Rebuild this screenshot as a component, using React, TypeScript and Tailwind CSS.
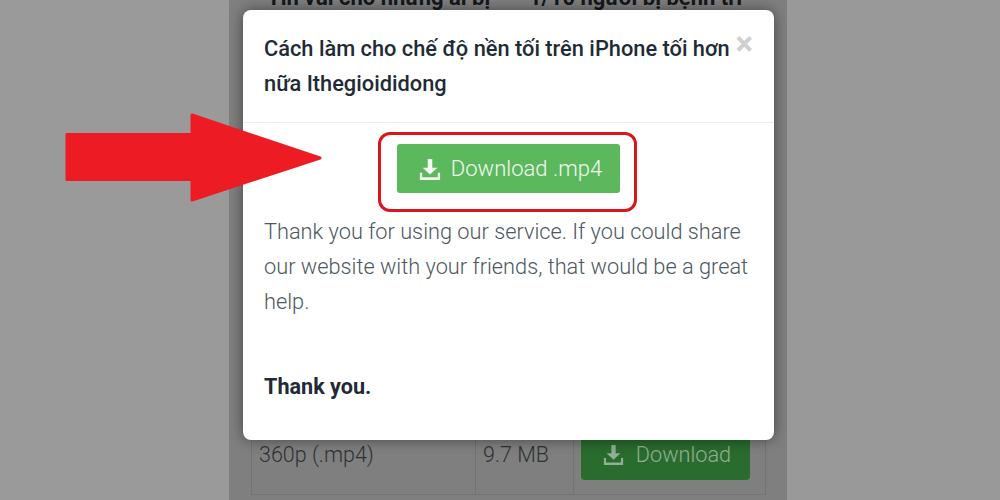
function DownloadIcon({ className }: { className: string }) {
  return (
    <svg viewBox="0 0 24 24" className={className} fill="currentColor">
      <path d="M9.500 1h5v9.500H20L12 18 4 10.500h5.500z" />
      <path d="M1 16h2.500v5h17v-5H23v8H1z" />
    </svg>
  );
}

function Arrow() {
  return (
    <svg viewBox="0 0 270 100" className="absolute left-[60px] top-[108px] w-[270px] h-[100px]">
      <path
        d="M7 26.500H132V7L260 50 132 92V71.500H7Z"
        fill="#ed1c24"
        stroke="#ed1c24"
        strokeWidth="3"
        strokeLinejoin="round"
      />
    </svg>
  );
}

export default function App() {
  return (
    <div className="relative w-[1000px] h-[500px] overflow-hidden bg-[#9b9b9b] font-['Roboto',sans-serif]">
      {/* Page behind the overlay */}
      <div className="flex h-full">
        <div className="w-[229px] bg-[#9a9a9a]" />
        <div className="w-[558px] bg-[#7f7f7f] flex flex-col">
          <div className="h-[10px] overflow-hidden pl-[38px] whitespace-nowrap">
            <p className="-mt-[16px] text-[22px] leading-[28px] font-bold text-[#14181c]">
              Tin vui cho những ai bị <span className="invisible">trĩ:</span> 1/10 người bị bệnh trĩ
            </p>
          </div>
          <div className="flex-1 flex flex-col justify-end pb-[5px] pl-[22px] pr-[21px]">
            <div className="grid grid-cols-[223px_98px_194px] h-[61px] border-x border-b border-[#737373] text-[#2f3235] text-[21.500px] font-light">
              <div className="pl-[7px] pt-[7px] leading-[28px]">360p (.mp4)</div>
              <div className="pl-[7px] pt-[7px] leading-[28px] border-l border-[#737373]">9.7 MB</div>
              <div className="pl-[7px] border-l border-[#737373]">
                <div className="h-[46px] w-[169px] rounded-b-[4px] bg-[#2a6b2e] text-[#8fb094] flex justify-center gap-[12px] pt-[8px] pl-[3px]">
                  <DownloadIcon className="w-[21px] h-[21px] mt-[2px]" />
                  <span className="leading-[26px] text-[21.700px] font-light">Download</span>
                </div>
              </div>
            </div>
          </div>
        </div>
        <div className="flex-1 bg-[#999999]" />
      </div>

      {/* Modal */}
      <div className="absolute left-[243px] top-[10px] w-[531px] h-[430px] bg-white rounded-[8px] shadow-[0_0_14px_rgba(0,0,0,0.45)] flex flex-col">
        <div className="h-[113px] border-b border-[#ececec] pl-[21px] pr-[21px] pt-[21px] flex">
          <h2 className="flex-1 text-[21.800px] leading-[35px] font-medium text-[#1f2b36]">
            Cách làm cho chế độ nền tối trên iPhone tối hơn nữa Ithegioididong
          </h2>
          <span className="-mt-[1px] text-[33px] leading-[28px] font-bold text-[#d0d0d0]">×</span>
        </div>
        <div className="flex-1 pl-[21px] pr-[20px] pt-[9px]">
          <div className="ml-[114px] w-[259px] h-[80px] border-[3px] border-[#d8161c] rounded-[12px] pl-[16px] pt-[9px]">
            <div className="w-[223px] h-[49px] rounded-[3px] bg-[#5cb85c] text-[#f2f9f2] flex items-center justify-center gap-[10px] pl-[4px]">
              <DownloadIcon className="w-[22px] h-[22px]" />
              <span className="text-[22px] leading-[28px] font-light">Download .mp4</span>
            </div>
          </div>
          <p className="mt-[2px] text-[21.750px] leading-[35px] font-light text-[#4c5761]">
            Thank you for using our service. If you could share our website with your friends, that would be a great help.
          </p>
          <p className="mt-[50px] text-[21.600px] leading-[35px] font-bold text-[#1f2b36]">Thank you.</p>
        </div>
      </div>

      <Arrow />
    </div>
  );
}
